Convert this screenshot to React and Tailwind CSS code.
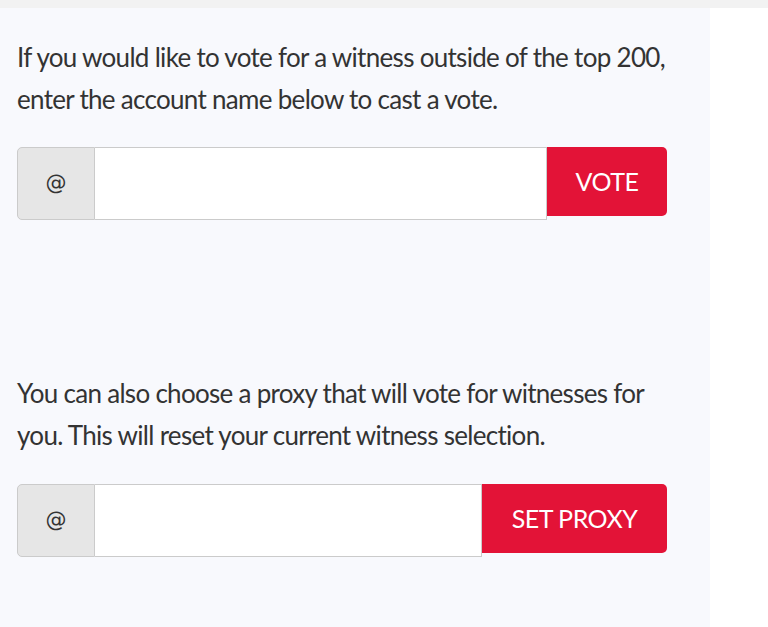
import React from "react";

function InputGroup({ label, btnWidth }) {
  return (
    <div className="flex items-start w-[650px]">
      <div className="flex h-[73px] flex-1">
        <div className="w-[78px] shrink-0 flex items-center justify-center bg-[#e6e6e6] border border-[#cbcbcb] rounded-l-[5px] text-[21px] text-[#333] font-['DejaVu_Sans',sans-serif]">
          @
        </div>
        <div className="flex-1 bg-white border border-l-0 border-[#cbcbcb]"></div>
      </div>
      <button
        className={`${btnWidth} h-[69px] shrink-0 bg-[#e31337] text-white text-[25px] tracking-[-0.5px] rounded-r-[5px] flex items-center justify-center`}
      >
        {label}
      </button>
    </div>
  );
}

export default function App() {
  return (
    <div className="w-[768px] h-[627px] flex flex-col bg-white font-['Lato',sans-serif] overflow-hidden">
      <div className="h-[8px] bg-[#f2f2f2] shrink-0"></div>
      <div className="flex flex-1">
        <div className="w-[710px] bg-[#f8f9fd] pl-[17px] pr-[17px]">
          <p className="mt-[28px] text-[26px] leading-[42px] text-[#333] tracking-[-0.7px]">
            If you would like to vote for a witness outside of the top 200, enter the account name below to cast a vote.
          </p>
          <div className="mt-[27px]">
            <InputGroup label="VOTE" btnWidth="w-[120px]" />
          </div>
          <p className="mt-[152px] text-[26px] leading-[42px] text-[#333] tracking-[-0.7px]">
            You can also choose a proxy that will vote for witnesses for you. This will reset your current witness selection.
          </p>
          <div className="mt-[28px]">
            <InputGroup label="SET PROXY" btnWidth="w-[185px]" />
          </div>
        </div>
        <div className="flex-1 bg-white"></div>
      </div>
    </div>
  );
}
